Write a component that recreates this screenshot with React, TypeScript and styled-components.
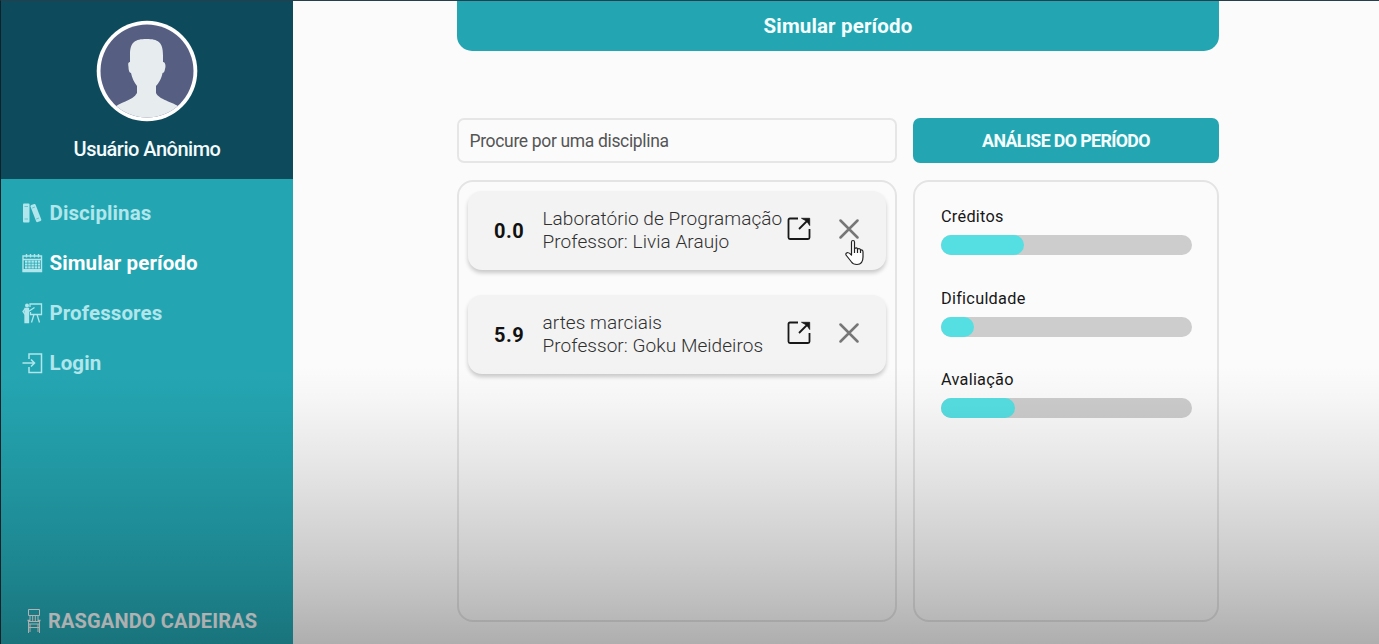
import React from 'react';
import styled, { createGlobalStyle } from 'styled-components';

const GlobalStyle = createGlobalStyle`
  * { box-sizing: border-box; }
  body { margin: 0; background: #fbfbfc; font-family: Roboto, 'Liberation Sans', sans-serif; }
  h1, p { margin: 0; }
`;

const Page = styled.div`
  position: relative;
  display: flex;
  width: 1379px;
  height: 644px;
  overflow: hidden;
  border-top: 1px solid #263f4d;
  border-left: 1px solid #0b2228;
  background: #fbfbfc;
`;

const Shade = styled.div`
  position: absolute;
  inset: 0;
  pointer-events: none;
  background: linear-gradient(
    to bottom,
    rgba(0, 0, 0, 0) 365px,
    rgba(0, 0, 0, 0.025) 400px,
    rgba(0, 0, 0, 0.09) 470px,
    rgba(0, 0, 0, 0.19) 559px,
    rgba(0, 0, 0, 0.24) 599px,
    rgba(0, 0, 0, 0.305) 643px
  );
`;

const Sidebar = styled.aside`
  display: flex;
  flex-direction: column;
  flex: none;
  width: 292px;
  background: #24a6b2;
`;

const Profile = styled.div`
  display: flex;
  flex-direction: column;
  align-items: center;
  height: 178px;
  padding: 19px 0 0;
  background: #0c4a5c;
`;

const UserName = styled.p`
  margin-top: 15px;
  font-size: 20px;
  font-weight: 500;
  line-height: 24px;
  letter-spacing: -0.5px;
  color: #f3fbfd;
`;

const Nav = styled.nav`
  display: flex;
  flex-direction: column;
  flex: 1;
  padding: 9px 0 0 19.5px;
`;

const NavItem = styled.a<{ $active?: boolean }>`
  display: flex;
  align-items: center;
  gap: 7px;
  height: 50px;
  font-size: 20.5px;
  font-weight: 700;
  letter-spacing: 0.1px;
  color: ${(p) => (p.$active ? '#ffffff' : '#b0e6ec')};
  svg { color: #b0e6ec; }
`;

const Brand = styled.div`
  display: flex;
  align-items: center;
  gap: 6px;
  height: 46px;
  padding-left: 25px;
  font-size: 20px;
  font-weight: 700;
  letter-spacing: 0.15px;
  color: #eef1f2;
`;

const Main = styled.main`
  flex: none;
  width: 762px;
  margin-left: 164px;
`;

const Title = styled.h1`
  display: flex;
  align-items: center;
  justify-content: center;
  height: 50px;
  border-radius: 0 0 15px 15px;
  background: #24a6b2;
  color: #f4ffff;
  font-size: 20.5px;
  font-weight: 700;
  letter-spacing: 0.15px;
`;

const Columns = styled.div`
  display: grid;
  grid-template-columns: 440px 306px;
  grid-template-rows: 45px 442px;
  gap: 17px 16px;
  margin-top: 67px;
`;

const Search = styled.input`
  width: 100%;
  height: 45px;
  padding: 0 10px 0 10.5px;
  border: 2px solid #e6e6e7;
  border-radius: 7px;
  outline: none;
  background: #fbfbfc;
  font: 400 17.5px Roboto, sans-serif;
  letter-spacing: -0.34px;
  &::placeholder { color: #555; opacity: 1; }
`;

const AnalyseButton = styled.button`
  border: 0;
  border-radius: 7px;
  background: #24a6b2;
  color: #f4ffff;
  font: 700 17.8px Roboto, sans-serif;
  letter-spacing: -0.63px;
`;

const Panel = styled.section<{ $pad: string; $gap: number }>`
  display: flex;
  flex-direction: column;
  gap: ${(p) => p.$gap}px;
  padding: ${(p) => p.$pad};
  border: 2px solid #e4e4e5;
  border-radius: 16px;
`;

const Card = styled.article`
  display: flex;
  align-items: center;
  flex: none;
  height: 79px;
  padding-left: 26px;
  border-radius: 14px;
  background: #f3f3f3;
  box-shadow: 0 3px 4px rgba(0, 0, 0, 0.2);
`;

const Score = styled.span`
  width: 48.5px;
  font-size: 20px;
  font-weight: 700;
  letter-spacing: 0.5px;
  color: #111;
`;

const CardText = styled.div`
  width: 244.5px;
  padding-bottom: 2px;
  font-size: 19px;
  font-weight: 300;
  line-height: 23px;
  letter-spacing: 0.06px;
  white-space: nowrap;
  color: #303030;
`;

const CardActions = styled.div`
  display: flex;
  align-items: center;
  gap: 28px;
  margin-top: -4px;
`;

const Metric = styled.div`
  display: flex;
  flex-direction: column;
  gap: 9px;
  height: 48.5px;
`;

const MetricName = styled.span`
  font-size: 16.3px;
  line-height: 18px;
  letter-spacing: 0.27px;
  color: #171717;
`;

const Track = styled.div`
  height: 20px;
  flex: none;
  border-radius: 10px;
  background: #cdcdcd;
`;

const Fill = styled.div`
  height: 100%;
  border-radius: 10px;
  background: #56dfe2;
`;

const Pointer = styled.svg`
  position: absolute;
  left: 843px;
  top: 238px;
`;

const Avatar = () => (
  <svg width="102" height="102" viewBox="0 0 102 102">
    <defs>
      <clipPath id="face"><circle cx="51" cy="51" r="46.500" /></clipPath>
    </defs>
    <circle cx="51" cy="51" r="50.300" fill="#fff" />
    <g clipPath="url(#face)">
      <rect width="102" height="102" fill="#565f82" />
      <path
        d="M34 35C34 22 39 19 50.500 19C62 19 67 22 67 35V42C69.500 42 70 46 69 49C68.500 52 67.500 53 66.500 53C65.500 59 62 64 60 66V73C64 81 80 82 85 89V102H17V89C22 82 37 81 41 73V66C38 62 36 58 35 53C33.500 53 32.500 50 32.500 47C32 44 32 42 34 42Z"
        fill="#e7ecef"
      />
    </g>
  </svg>
);

const BooksIcon = () => (
  <svg width="22" height="22" viewBox="0 0 22 22" fill="none">
    <rect x="2" y="1.500" width="6.500" height="19" rx="1" fill="currentColor" />
    <path d="M3.500 4.500H7M3.500 17H7" stroke="#24a6b2" strokeWidth=".5" />
    <path d="M9.500 4.500Q9.300 3.500 10.300 3.100L13.200 2Q14.200 1.700 14.600 2.700L20.300 17.600Q20.600 18.600 19.600 19L16.700 20.100Q15.600 20.400 15.200 19.400Z" fill="currentColor" />
    <path d="M11.200 6L14 5M15.200 17L18 16" stroke="#24a6b2" strokeWidth=".5" />
  </svg>
);

const CalendarIcon = () => (
  <svg width="22" height="22" viewBox="0 0 22 22" fill="none" stroke="currentColor">
    <path d="M2 4H20.500V19.500H2ZM2 7.500H20.500M5.500 2V5.500M9.500 2V5.500M13.500 2V5.500M17.500 2V5.500" strokeWidth="1.400" />
    <path d="M4 9.700H19M4 12.500H19M4 15.300H19" strokeWidth="2.200" strokeDasharray="2.500 .7" />
    <path d="M2 18H20.500" strokeWidth="2" />
  </svg>
);

const TeacherIcon = () => (
  <svg width="22" height="22" viewBox="0 0 22 22" fill="none" stroke="currentColor" strokeWidth="1.300">
    <circle cx="6" cy="3.500" r="2" fill="currentColor" stroke="none" />
    <path d="M4 6.500H7.500V20.500H4Z" fill="currentColor" />
    <path d="M4 6.800L2 9.500L4 12.500M7.500 9.500L13.500 5.500" />
    <path d="M9 5V2H20.500V12.500H9.500V10M13 12.500L10.500 20.500M16 12.500L18.500 20.500" />
  </svg>
);

const LoginIcon = () => (
  <svg width="22" height="22" viewBox="0 0 22 22" fill="none" stroke="currentColor" strokeWidth="1.500">
    <path d="M8 7V2H20.500V20.500H8V15M1.500 11H13.500M10 7.500L13.500 11L10 14.500" />
  </svg>
);

const ChairIcon = () => (
  <svg width="16" height="26" viewBox="0 0 16 26" fill="none" stroke="currentColor" strokeWidth="1">
    <path d="M2.500 1.500H13.500V7.500H2.500ZM4 7.500V13M6.700 7.500V13M9.300 7.500V13M12 7.500V13M2.500 13.500H13.500V16H2.500ZM2.500 13V25M13.500 13V25M4 16V24M12 16V24M3 19.500H13" />
    <path d="M1.500 12.500H4M12 12.500H14.500" strokeWidth="1.500" />
  </svg>
);

const OpenIcon = () => (
  <svg width="24" height="24" viewBox="0 0 24 24" fill="none" stroke="#181818" strokeWidth="1.800">
    <path d="M11 1.500H3Q1.500 1.500 1.500 3V20.500Q1.500 22 3 22H21Q22.500 22 22.500 20.500V12" />
    <path d="M12 12L21 3" />
    <path d="M14.500 1.300H22.700V8.500L19.800 4.200Z" fill="#181818" stroke="#181818" strokeWidth=".8" />
  </svg>
);

const CloseIcon = () => (
  <svg width="20" height="20" viewBox="0 0 20 20" fill="none" stroke="#777" strokeWidth="2.500" strokeLinecap="round">
    <path d="M1.500 1.500L18.500 18.500M18.500 1.500L1.500 18.500" />
  </svg>
);

const subjects = [
  { score: '0.0', name: 'Laboratório de Programação', teacher: 'Livia Araujo' },
  { score: '5.9', name: 'artes marciais', teacher: 'Goku Meideiros' },
];

const metrics = [
  { name: 'Créditos', value: 33 },
  { name: 'Dificuldade', value: 13 },
  { name: 'Avaliação', value: 29.3 },
];

export default function App() {
  return (
    <Page>
      <GlobalStyle />
      <Sidebar>
        <Profile>
          <Avatar />
          <UserName>Usuário Anônimo</UserName>
        </Profile>
        <Nav>
          <NavItem><BooksIcon />Disciplinas</NavItem>
          <NavItem $active><CalendarIcon />Simular período</NavItem>
          <NavItem><TeacherIcon />Professores</NavItem>
          <NavItem><LoginIcon />Login</NavItem>
        </Nav>
        <Brand><ChairIcon />RASGANDO CADEIRAS</Brand>
      </Sidebar>
      <Main>
        <Title>Simular período</Title>
        <Columns>
          <Search placeholder="Procure por uma disciplina" />
          <AnalyseButton>ANÁLISE DO PERÍODO</AnalyseButton>
          <Panel $pad="9px 9px" $gap={25}>
            {subjects.map((s) => (
              <Card key={s.name}>
                <Score>{s.score}</Score>
                <CardText>
                  <p>{s.name}</p>
                  <p>Professor: {s.teacher}</p>
                </CardText>
                <CardActions><OpenIcon /><CloseIcon /></CardActions>
              </Card>
            ))}
          </Panel>
          <Panel $pad="26px 25px 0 26px" $gap={33}>
            {metrics.map((m) => (
              <Metric key={m.name}>
                <MetricName>{m.name}</MetricName>
                <Track><Fill style={{ width: `${m.value}%` }} /></Track>
              </Metric>
            ))}
          </Panel>
        </Columns>
      </Main>
      <Shade />
      <Pointer width="22" height="28" viewBox="0 0 22 28" fill="#fff" stroke="#222" strokeWidth="1.200" strokeLinejoin="round">
        <path d="M7.500 16V3Q7.500 1.500 9 1.500Q10.500 1.500 10.500 3V9.500Q13 8 13.500 10Q16 9 16.500 11Q19 10.500 19 13V18Q19 25.500 13 25.500Q9 25.500 7.500 23L2 16Q1.500 14 3.500 13.500Q5 13.500 7.500 16Z" />
        <path d="M10.500 9.500V14M13.500 10V14M16.500 11V14" />
      </Pointer>
    </Page>
  );
}
